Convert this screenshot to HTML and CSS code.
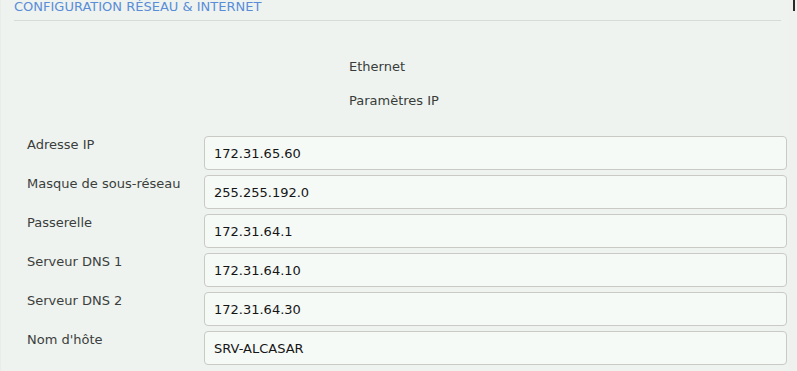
FILE: index.html
```html
<!DOCTYPE html>
<html lang="fr">
<head>
<meta charset="utf-8">
<title>Configuration réseau &amp; Internet</title>
<link rel="stylesheet" href="styles.css">
</head>
<body>
<div class="window">
  <main class="panel">
    <header class="panel-header">
      <h1 class="panel-title">CONFIGURATION RÉSEAU &amp; INTERNET</h1>
    </header>
    <section class="section-heads">
      <p class="section-head">Ethernet</p>
      <p class="section-head">Paramètres IP</p>
    </section>
    <form class="form">
      <label class="form-label" for="ip">Adresse IP</label>
      <input class="form-input" id="ip" type="text" value="172.31.65.60">
      <label class="form-label" for="mask">Masque de sous-réseau</label>
      <input class="form-input" id="mask" type="text" value="255.255.192.0">
      <label class="form-label" for="gw">Passerelle</label>
      <input class="form-input" id="gw" type="text" value="172.31.64.1">
      <label class="form-label" for="dns1">Serveur DNS 1</label>
      <input class="form-input" id="dns1" type="text" value="172.31.64.10">
      <label class="form-label" for="dns2">Serveur DNS 2</label>
      <input class="form-input" id="dns2" type="text" value="172.31.64.30">
      <label class="form-label" for="host">Nom d'hôte</label>
      <input class="form-input" id="host" type="text" value="SRV-ALCASAR">
    </form>
  </main>
  <div class="edge"></div>
</div>
</body>
</html>
```
FILE: styles.css
```css
* { box-sizing: border-box; }
html, body {
  margin: 0;
  padding: 0;
  height: 100%;
}
body {
  background: #eef3ef;
  font-family: "DejaVu Sans", "Liberation Sans", sans-serif;
  font-size: 13px;
  overflow: hidden;
}
.window {
  display: flex;
  height: 100%;
}
.panel {
  flex: 1 1 auto;
  min-width: 0;
  border-left: 1px solid #e9edea;
}
.panel-header {
  margin: 0 8px 0 13px;
  height: 21px;
  border-bottom: 1px solid #d6dbd7;
}
.panel-title {
  margin: 0;
  font-size: 13px;
  font-weight: normal;
  line-height: 15px;
  color: #5a8dd8;
  position: relative;
  top: -1px;
}
.section-heads {
  display: flex;
  flex-direction: column;
  gap: 19px;
  padding: 38px 0 0 348px;
}
.section-head {
  margin: 0;
  line-height: 15px;
  color: #383c3a;
}
.form {
  display: grid;
  grid-template-columns: 177px 1fr;
  row-gap: 5px;
  padding: 28px 2px 0 26px;
}
.form-label {
  padding-top: 1px;
  line-height: 15px;
  color: #3b3e3c;
}
.form-input {
  height: 34px;
  margin: 0;
  padding: 1px 9px 0 9px;
  border: 1px solid #c9c9c6;
  border-radius: 4px;
  background: #f6faf7;
  font: inherit;
  font-size: 13px;
  color: #151515;
  line-height: 15px;
}
.edge {
  flex: 0 0 8px;
  background:
    linear-gradient(to right, transparent 4px, #2a2a2a 4px, #2a2a2a 6px, transparent 6px) top left / 100% 11px no-repeat,
    #eff1ef;
}
```
